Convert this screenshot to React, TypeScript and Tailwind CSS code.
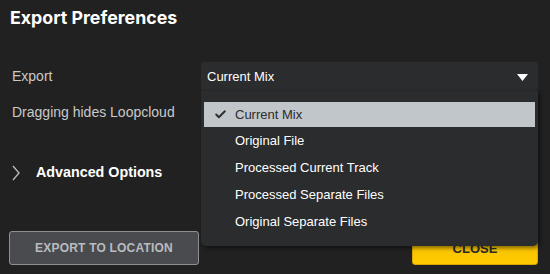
import { Check } from 'lucide-react';

const options = [
  'Current Mix',
  'Original File',
  'Processed Current Track',
  'Processed Separate Files',
  'Original Separate Files',
];

export default function App() {
  const selected = 'Current Mix';

  return (
    <div className="relative h-[274px] w-[550px] overflow-hidden bg-[#212121] font-['Liberation_Sans',Arial,sans-serif]">
      {/* Title */}
      <h1 className="pl-[10px] pt-[7px] font-['Inter',sans-serif] text-[17.8px] font-bold leading-[22px] text-white">
        Export Preferences
      </h1>

      {/* Export row */}
      <div className="mt-[33px] flex items-center pl-[12px] pr-[12px]">
        <span className="w-[189px] text-[14px] text-[#c9c9c9]">Export</span>
        <div className="relative flex-1">
          <div className="flex h-[29px] items-center justify-between rounded-[3px] bg-[#2b2c2e] pl-[6px] pr-[10px]">
            <span className="text-[13px] text-white">{selected}</span>
            <svg width="11" height="7" viewBox="0 0 11 7" className="mt-[1px]">
              <path d="M0 0 H11 L5.5 7 Z" fill="#ffffff" />
            </svg>
          </div>

          {/* Open dropdown menu */}
          <div className="absolute left-0 right-0 top-[29px] z-10 rounded-b-[5px] bg-[#2b2c2e] pb-[11px] pt-[11px] shadow-[2px_2px_4px_rgba(0,0,0,0.5)]">
            {options.map((o) => (
              <div
                key={o}
                className={
                  o === selected
                    ? 'mx-[3px] flex h-[25px] items-center bg-[#c1c6cb] text-[13px] text-[#2b2c2e]'
                    : 'mx-[3px] flex h-[27px] items-center text-[13px] text-white'
                }
              >
                <span className="flex w-[31px] justify-center pl-[1px]">
                  {o === selected && <Check size={13} strokeWidth={3.5} className="text-[#2b2c2e]" />}
                </span>
                {o}
              </div>
            ))}
          </div>
        </div>
      </div>

      {/* Dragging row */}
      <div className="mt-[11px] pl-[12px] text-[14px] text-[#c9c9c9]">Dragging hides Loopcloud</div>

      {/* Advanced options */}
      <div className="mt-[39px] flex items-center pl-[12px]">
        <svg width="8" height="16" viewBox="0 0 8 16">
          <path d="M1 1 L7 8 L1 15" fill="none" stroke="#bdbdbd" strokeWidth="1.3" />
        </svg>
        <span className="ml-[16px] text-[14.3px] font-bold text-white">Advanced Options</span>
      </div>

      {/* Buttons */}
      <div className="mt-[48px] flex items-center justify-between pl-[9px] pr-[12px]">
        <button className="flex h-[34px] w-[190px] items-center justify-center rounded-[3px] border border-[#8d8f92] bg-[#4a4b4e] text-[12px] font-bold tracking-[0.2px] text-[#b9bcc0]">
          EXPORT TO LOCATION
        </button>
        <button className="flex h-[33px] w-[126px] items-center justify-center rounded-[3px] border border-[#d9a700] bg-gradient-to-b from-[#f5c000] to-[#ffca00] text-[13px] font-bold text-[#2a2a2a]">
          CLOSE
        </button>
      </div>
    </div>
  );
}
